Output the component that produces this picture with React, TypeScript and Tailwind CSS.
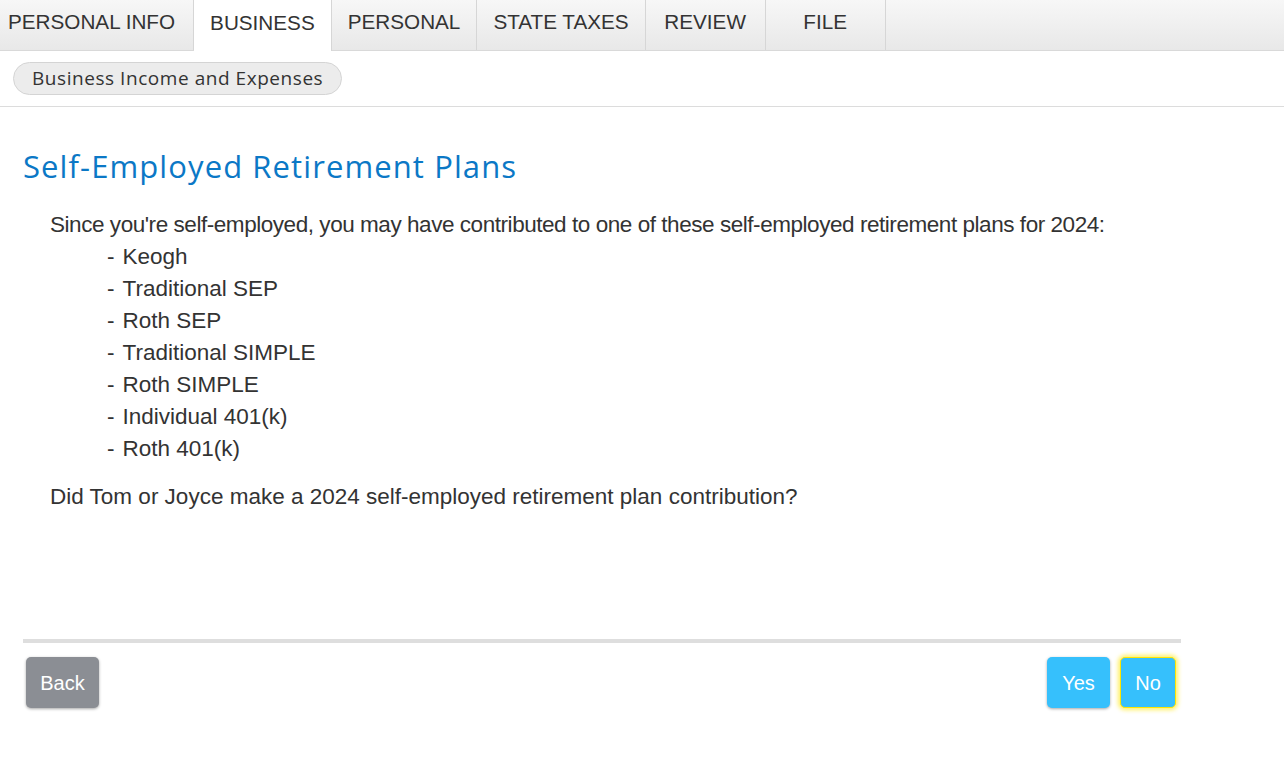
const tabs = [
  { label: 'PERSONAL INFO', cls: 'pl-2 pr-[18px]' },
  { label: 'BUSINESS', active: true },
  { label: 'PERSONAL' },
  { label: 'STATE TAXES' },
  { label: 'REVIEW' },
  { label: 'FILE' },
]

const plans = [
  'Keogh',
  'Traditional SEP',
  'Roth SEP',
  'Traditional SIMPLE',
  'Roth SIMPLE',
  'Individual 401(k)',
  'Roth 401(k)',
]

export default function App() {
  return (
    <div className="h-[784px] w-[1284px] overflow-hidden bg-white font-['Liberation_Sans',Arial,sans-serif] text-[#333]">
      {/* top tabs */}
      <div className="flex h-[51px] border-b border-[#d9d9d9] bg-gradient-to-b from-[#f7f7f7] to-[#e8e8e8]">
        {tabs.map((t) => (
          <div
            key={t.label}
            className={
              'flex min-w-[120px] items-center justify-center border-r border-[#d6d6d6] pb-[6px] text-[20.7px] ' +
              (t.cls ?? 'px-4') +
              (t.active ? ' -mb-px bg-white' : '')
            }
          >
            {t.label}
          </div>
        ))}
      </div>

      {/* breadcrumb */}
      <div className="flex h-[56px] items-center border-b border-[#dcdcdc] px-[13px]">
        <span className="rounded-full border border-[#d4d4d4] bg-[#ececec] px-[18px] py-[1px] font-['Open_Sans',sans-serif] text-[19px] tracking-[0.55px] text-[#333]">
          Business Income and Expenses
        </span>
      </div>

      <div className="w-[1181px] pl-[23px]">
        <h1 className="mt-[38px] font-['Open_Sans',sans-serif] text-[31px] leading-[42px] tracking-[1.1px] text-[#0b78c6]">
          Self-Employed Retirement Plans
        </h1>

        <div className="mt-[22px] pl-[27px] text-[22.5px] leading-[32px]">
          <p className="tracking-[-0.45px]">
            Since you're self-employed, you may have contributed to one of these self-employed retirement plans for 2024:
          </p>
          <ul className="pl-[57px]">
            {plans.map((p) => (
              <li key={p} className="flex gap-[8px]">
                <span>-</span>
                <span>{p}</span>
              </li>
            ))}
          </ul>
          <p className="mt-[16px]">Did Tom or Joyce make a 2024 self-employed retirement plan contribution?</p>
        </div>

        <div className="mt-[126px] h-[4px] bg-[#dedede]" />

        <div className="mt-[14px] flex items-center justify-between pl-[3px] pr-[5px]">
          <button className="h-[51px] w-[73px] rounded-[5px] bg-[#8b8e94] text-[20px] text-white shadow-[0_1px_3px_rgba(0,0,0,0.35)]">
            Back
          </button>
          <div className="flex gap-[10px]">
            <button className="h-[51px] w-[63px] rounded-[5px] bg-[#36c0fc] text-[20px] text-white shadow-[0_1px_3px_rgba(0,0,0,0.35)]">
              Yes
            </button>
            <button className="h-[51px] w-[56px] rounded-[5px] border border-[#ffe600] bg-[#36c0fc] text-[20px] text-white shadow-[0_0_4px_2px_rgba(255,230,0,0.6)]">
              No
            </button>
          </div>
        </div>
      </div>
    </div>
  )
}
